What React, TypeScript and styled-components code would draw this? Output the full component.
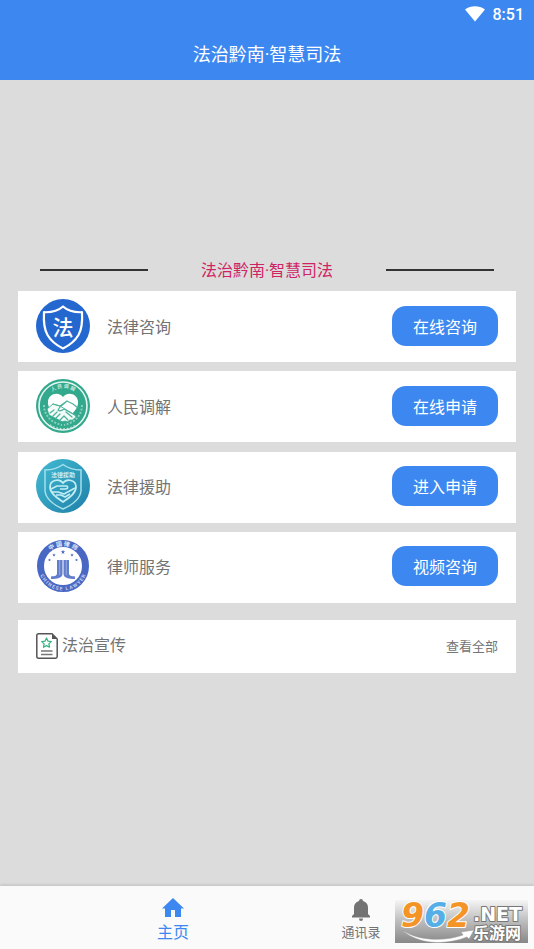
import React from "react";
import styled, { createGlobalStyle } from "styled-components";

const blue = "#3d88f0";
const fontStack = 'Roboto, "Noto Sans CJK SC", sans-serif';

const GlobalStyle = createGlobalStyle`
  *, *::before, *::after { box-sizing: border-box; }
  body { margin: 0; background: #dcdcdc; font-family: ${fontStack}; }
  button { font-family: inherit; border: 0; cursor: pointer; }
  h1, h2, ul { margin: 0; padding: 0; font-weight: 400; }
`;

const Screen = styled.div`
  display: flex;
  flex-direction: column;
  min-height: 100vh;
  background: #dcdcdc;
`;

const Header = styled.header`
  background: ${blue};
  color: #fff;
`;

const StatusBar = styled.div`
  display: flex;
  justify-content: flex-end;
  align-items: center;
  gap: 8px;
  height: 28px;
  padding: 0 10px;
  font-size: 16px;
  font-weight: 500;
`;

const PageTitle = styled.h1`
  padding-top: 2px;
  font-size: 18px;
  line-height: 50px;
  text-align: center;
`;

const Content = styled.main`
  flex: 1;
  display: flex;
  flex-direction: column;
  padding: 0 18px;
`;

const Banner = styled.div`
  height: 170px;
`;

const SectionHeading = styled.div`
  display: grid;
  grid-template-columns: 5fr 11fr 5fr;
  align-items: center;
  height: 41px;
  padding: 0 22px;
`;

const Rule = styled.span`
  height: 2px;
  margin-bottom: 2px;
  background: #333;
`;

const SectionTitle = styled.h2`
  color: #cf2463;
  font-size: 16px;
  line-height: 24px;
  text-align: center;
`;

const ServiceList = styled.ul`
  display: grid;
  align-content: space-between;
  min-height: 312px;
  list-style: none;
`;

const ServiceRow = styled.li`
  display: flex;
  align-items: center;
  height: 71px;
  padding: 0 18px 2px;
  background: #fff;
`;

const Emblem = styled.svg`
  flex: none;
  width: 54px;
  height: 54px;
`;

const ServiceName = styled.span`
  flex: 1;
  margin-left: 17px;
  color: #737373;
  font-size: 16px;
`;

const ActionButton = styled.button`
  height: 40px;
  padding: 0 21px;
  border-radius: 14px;
  background: ${blue};
  color: #fff;
  font-size: 16px;
`;

const NewsBar = styled.section`
  display: flex;
  align-items: center;
  height: 53px;
  margin: 17px 0;
  padding: 0 18px 2px;
  background: #fff;
`;

const NewsTitle = styled.h2`
  flex: 1;
  margin-left: 4px;
  color: #737373;
  font-size: 16px;
  line-height: 24px;
`;

const MoreLink = styled.a`
  color: #757575;
  font-size: 13px;
  text-decoration: none;
`;

const TabBar = styled.nav`
  position: relative;
  display: flex;
  justify-content: center;
  height: 63px;
  background: #fafafa;
  box-shadow: 0 -1px 3px rgba(0, 0, 0, 0.14);
`;

const Tab = styled.button<{ $active?: boolean }>`
  flex: 0 1 188px;
  display: flex;
  flex-direction: column;
  align-items: center;
  justify-content: flex-end;
  padding: 0 0 4px;
  background: transparent;
  color: ${(p) => (p.$active ? blue : "#737373")};
  font-size: ${(p) => (p.$active ? 16 : 13)}px;
  line-height: 24px;
`;

const TabIcon = styled.svg`
  width: 26px;
  height: 26px;
  fill: currentColor;
`;

const Watermark = styled.svg`
  position: absolute;
  right: 6px;
  bottom: 6px;
  width: 133px;
  height: 43px;
`;

const DocIcon = styled.svg`
  flex: none;
  width: 22px;
  height: 26px;
`;

const cjk = '"Noto Sans CJK SC", sans-serif';

function ConsultEmblem() {
  return (
    <Emblem viewBox="0 0 54 54" aria-hidden="true">
      <circle cx="27" cy="27" r="27" fill="#2467cf" />
      <path
        d="M27 7.500C22 12 15 13.500 8 13.200C7.500 22 7.500 29 11.500 36C15 42 20 46 27 49.500C34 46 39 42 42.500 36C46.500 29 46.500 22 46 13.200C39 13.500 32 12 27 7.500Z"
        fill="none" stroke="#fff" strokeWidth="2.200" strokeLinejoin="round"
      />
      <text x="27" y="36" textAnchor="middle" fontFamily={cjk} fontSize="21" fontWeight="500" fill="#fff">法</text>
    </Emblem>
  );
}

function MediationEmblem() {
  return (
    <Emblem viewBox="0 0 54 54" aria-hidden="true">
      <defs>
        <path id="mediation-top" d="M9 27A18 18 0 0 1 45 27" />
      </defs>
      <circle cx="27" cy="27" r="27" fill="#32a88c" />
      <circle cx="27" cy="27" r="24" fill="none" stroke="#e5f5f1" strokeWidth="1.600" />
      <text fontFamily={cjk} fontSize="5" fontWeight="700" fill="#c5e8df" textAnchor="middle">
        <textPath href="#mediation-top" startOffset="50%">人 民 调 解</textPath>
      </text>
      <path d="M8 26C8 37 16 44 26 46M46 26C46 37 38 44 28 46" fill="none" stroke="#8ccfbe" strokeWidth="2" strokeDasharray="2 1.500" />
      <path d="M14 46C22 51 32 51 40 46" fill="none" stroke="#bfe5dc" strokeWidth="1.500" strokeDasharray="1.500 2" />
      <path d="M27 18C22 12 13 15 12 22C11 29 17 35 27 42C37 35 43 29 42 22C41 15 32 12 27 18Z" fill="#fff" />
      <path d="M11 30L17 25L24 27L39 36Q41 39 38 39.500Q37 42 34 41Q32 44 29 42Q26 44 23 41L13 36Z" fill="#f3fbf9" stroke="#32a88c" strokeWidth=".8" />
      <path d="M17 25L24 27L31 22L37 25L42 29M31 22L24 28L22 31Q24 33 28 30L39 36M14 34L18 31M17 37L21 33M20 39L24 35M24 41L28 37M30 33L36 38M28 37L32 41" fill="none" stroke="#4bb39a" strokeWidth="1.200" strokeLinecap="round" strokeLinejoin="round" />
    </Emblem>
  );
}

function AidEmblem() {
  return (
    <Emblem viewBox="0 0 54 54" aria-hidden="true">
      <defs>
        <linearGradient id="aid-fill" x1="0" y1="0" x2="1" y2="1">
          <stop offset="0" stopColor="#42bbd3" />
          <stop offset="1" stopColor="#207fa8" />
        </linearGradient>
      </defs>
      <circle cx="27" cy="27" r="27" fill="url(#aid-fill)" />
      <path d="M27 5.500C21 10 15 11 9 11V32C10 40 18 46 27 50C36 46 44 40 45 32V11C39 11 33 10 27 5.500Z" fill="none" stroke="#a4e0eb" strokeWidth="1.500" />
      <text x="27" y="18" textAnchor="middle" fontFamily={cjk} fontSize="6" fontWeight="700" fill="#c9eef4">法律援助</text>
      <path d="M27 24C23 19 14 21 14 28C14 34 20 38 27 43C34 38 40 34 40 28C40 21 31 19 27 24Z" fill="none" stroke="#c1edf4" strokeWidth="1.800" />
      <path d="M15 30L21 27H31Q33 30 29 30H24M15 33H22L28 35L39 29M20 36H25L29 38L34 35" fill="none" stroke="#c1edf4" strokeWidth="1.600" strokeLinejoin="round" />
    </Emblem>
  );
}

const star = "M0-2.200L.6-.7H2.200L.9.300L1.400 1.900L0 1L-1.400 1.900L-.9.300L-2.200-.7H-.6Z";

function LawyerEmblem() {
  return (
    <Emblem viewBox="0 0 54 54" aria-hidden="true">
      <defs>
        <path id="lawyer-top" d="M7 27A20 20 0 0 1 47 27" />
        <path id="lawyer-bottom" d="M2.500 27A24.500 24.500 0 0 0 51.500 27" />
      </defs>
      <circle cx="27" cy="27" r="22.500" fill="#fff" stroke="#4868c4" strokeWidth="7" />
      <text fontFamily={cjk} fontSize="6" fontWeight="700" fill="#e2e8f8" textAnchor="middle">
        <textPath href="#lawyer-top" startOffset="50%">中 国 律 师</textPath>
      </text>
      <text fontFamily="Roboto, sans-serif" fontSize="5" fontWeight="700" fill="#c5d0f0" textAnchor="middle">
        <textPath href="#lawyer-bottom" startOffset="50%">C H I N E S E &nbsp; L A W Y E R</textPath>
      </text>
      <g fill="#4868c4">
        <path d={star} transform="translate(27 13)" />
        <path d={star} transform="translate(18 16) scale(.8)" />
        <path d={star} transform="translate(36 16) scale(.8)" />
        <path d={star} transform="translate(13.500 21) scale(.7)" />
        <path d={star} transform="translate(40.500 21) scale(.7)" />
      </g>
      <path d="M21 21H26.500V35C26.500 39 21 40 15 40V37.500C19 37 21 37 21 34ZM27.500 21H33V34C33 37 35 37 39 37.500V40C33 40 27.500 39 27.500 35Z" fill="#627dcc" />
      <path d="M23.700 21V36M30.300 21V36" stroke="#aebce5" strokeWidth=".7" />
    </Emblem>
  );
}

const services = [
  { name: "法律咨询", action: "在线咨询", Icon: ConsultEmblem },
  { name: "人民调解", action: "在线申请", Icon: MediationEmblem },
  { name: "法律援助", action: "进入申请", Icon: AidEmblem },
  { name: "律师服务", action: "视频咨询", Icon: LawyerEmblem },
];

function SiteMark() {
  return (
    <Watermark viewBox="0 0 133 43" role="img" aria-label="962.NET 乐游网">
      <defs>
        <linearGradient id="mark-bg" x1="0" y1="0" x2="0" y2="1">
          <stop offset="0" stopColor="#f5f5f5" />
          <stop offset=".5" stopColor="#bcbcbc" />
          <stop offset="1" stopColor="#888" />
        </linearGradient>
      </defs>
      <rect width="133" height="43" fill="url(#mark-bg)" />
      <text
        x="6" y="27" fontFamily='"DejaVu Sans", sans-serif' fontWeight="700" fontStyle="italic" fontSize="33"
        stroke="#fff" strokeWidth="2" paintOrder="stroke" strokeLinejoin="round"
      >
        <tspan fill="#f49427">9</tspan>
        <tspan fill="#55aee5">6</tspan>
        <tspan fill="#f49427">2</tspan>
      </text>
      <path d="M7 30C25 42 51 41 68 35L66 32L79 30L74 39L72 37C49 46 22 44 7 30Z" fill="#fff" stroke="#999" strokeWidth=".5" />
      <g fill="#fff" stroke="#777" strokeWidth="2" paintOrder="stroke" strokeLinejoin="round" fontWeight="700">
        <text x="78" y="21" fontFamily='"DejaVu Sans", sans-serif' fontSize="19">.NET</text>
        <text x="78" y="39" fontFamily={cjk} fontSize="16">乐游网</text>
      </g>
    </Watermark>
  );
}

export default function App() {
  return (
    <Screen>
      <GlobalStyle />
      <Header>
        <StatusBar>
          <svg width="20" height="16" viewBox="0 0 20 16" aria-hidden="true">
            <path d="M0 3.500C6-.8 14-.8 20 3.500L10 15.500Z" fill="#fff" />
          </svg>
          <span>8:51</span>
        </StatusBar>
        <PageTitle>法治黔南·智慧司法</PageTitle>
      </Header>
      <Content>
        <Banner />
        <SectionHeading>
          <Rule />
          <SectionTitle>法治黔南·智慧司法</SectionTitle>
          <Rule />
        </SectionHeading>
        <ServiceList>
          {services.map(({ name, action, Icon }) => (
            <ServiceRow key={name}>
              <Icon />
              <ServiceName>{name}</ServiceName>
              <ActionButton type="button">{action}</ActionButton>
            </ServiceRow>
          ))}
        </ServiceList>
        <NewsBar>
          <DocIcon viewBox="0 0 22 26" fill="none" aria-hidden="true">
            <path d="M2 .8H16L21.200 6V23.500Q21.200 25.200 19.500 25.200H2.500Q.8 25.200 .8 23.500V2.500Q.8 .8 2.500 .8" stroke="#555" strokeWidth="1.500" />
            <path d="M16 1V6H21Z" fill="#555" />
            <path d="M10.500 5L12 8.200L15.300 8.600L12.900 10.900L13.500 14.200L10.500 12.600L7.500 14.200L8.100 10.900L5.700 8.600L9 8.200Z" stroke="#38b580" strokeWidth="1.300" strokeLinejoin="round" />
            <path d="M5 18H16.500M5 21.500H16.500" stroke="#777" strokeWidth="1.300" />
          </DocIcon>
          <NewsTitle>法治宣传</NewsTitle>
          <MoreLink href="#news">查看全部</MoreLink>
        </NewsBar>
      </Content>
      <TabBar>
        <Tab type="button" $active>
          <TabIcon viewBox="0 0 26 26" aria-hidden="true">
            <path d="M13 3L24 13.500H21V22H15V15H11V22H5V13.500H2Z" />
          </TabIcon>
          主页
        </Tab>
        <Tab type="button">
          <TabIcon viewBox="0 0 26 26" aria-hidden="true">
            <path d="M13 4Q15 4 15 6Q20 7.500 20 12.500V19L22 21V22.500H4V21L6 19V12.500Q6 7.500 11 6Q11 4 13 4ZM11 23.500H15Q15 26 13 26T11 23.500Z" />
          </TabIcon>
          通讯录
        </Tab>
        <SiteMark />
      </TabBar>
    </Screen>
  );
}
